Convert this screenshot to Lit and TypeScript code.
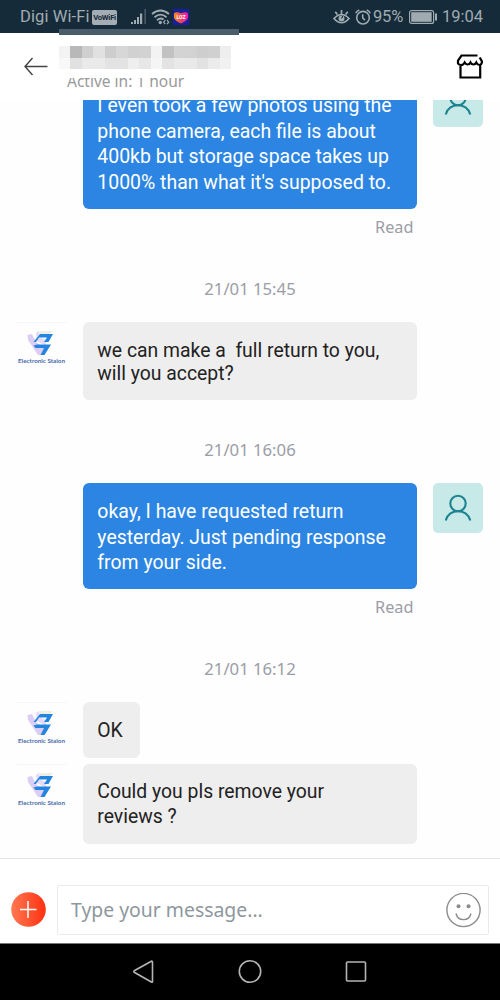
import { LitElement, html, css, svg, nothing } from "lit";
import { customElement, property } from "lit/decorators.js";

type Item =
  | { kind: "date"; text: string; height: number }
  | { kind: "read"; height: number }
  | { kind: "mine" | "shop"; lines: string[]; height: number; gap?: number; tight?: boolean; short?: boolean };

const ITEMS: Item[] = [
  {
    kind: "mine",
    height: 132,
    lines: [
      "I even took a few photos using the",
      "phone camera, each file is about",
      "400kb but storage space takes up",
      "1000% than what it's supposed to.",
    ],
  },
  { kind: "read", height: 36 },
  { kind: "date", text: "21/01 15:45", height: 77 },
  {
    kind: "shop",
    height: 78,
    tight: true,
    lines: ["we can make a  full return to you,", "will you accept?"],
  },
  { kind: "date", text: "21/01 16:06", height: 83 },
  {
    kind: "mine",
    height: 106,
    lines: ["okay, I have requested return", "yesterday. Just pending response", "from your side."],
  },
  { kind: "read", height: 36 },
  { kind: "date", text: "21/01 16:12", height: 77 },
  { kind: "shop", height: 56, short: true, lines: ["OK"] },
  { kind: "shop", height: 80, gap: 5.6, lines: ["Could you pls remove your", "reviews ?"] },
];

@customElement("status-bar")
export class StatusBar extends LitElement {
  static styles = css`
    :host {
      display: flex;
      align-items: center;
      height: 33px;
      padding: 1px 17px 0 20px;
      box-sizing: border-box;
      background: #152b39;
      color: #a0abb1;
      font: 16.5px/32px Roboto, sans-serif;
      white-space: nowrap;
    }
    .vowifi {
      margin-left: 3px;
      width: 25px;
      height: 15px;
      border-radius: 2px;
      background: #a3adb3;
      color: #152b39;
      font: bold 7.8px/15px Roboto, sans-serif;
      text-align: center;
      letter-spacing: -0.3px;
    }
    .signal { margin-left: 13px; }
    .wifi { margin-left: 4px; }
    .app { margin-left: 3px; }
    .right { display: flex; align-items: center; margin-left: auto; }
    .alarm { margin-left: 5px; }
    .pct { margin-left: 2px; width: 31px; letter-spacing: -0.2px; }
    .battery { margin: 0 4px 0 5px; }
    svg { display: block; }
    .carrier { letter-spacing: 0.1px; width: 69px; }
    .clock { width: 41px; }
  `;
  render() {
    return html`
      <span class="carrier">Digi Wi-Fi</span>
      <span class="vowifi">VoWiFi</span>
      <svg class="signal" width="17" height="16" viewBox="0 0 17 16">
        <g fill="#a0abb1">
          <rect x="1" y="13" width="2" height="2" /><rect x="4" y="11" width="2" height="4" />
          <rect x="7" y="8" width="2" height="7" /><rect x="10" y="4.500" width="2.200" height="10.500" />
          <rect x="14.500" y="0" width="1.300" height="15" opacity=".45" />
        </g>
      </svg>
      <svg class="wifi" width="19" height="16" viewBox="0 0 19 16" fill="none" stroke="#a0abb1" stroke-width="1.800">
        <path d="M1 5Q9.500-2 18 5M3.500 8.200Q9.500 3 15.500 8.200M6 11.200Q9.500 8.200 12.500 10.500" />
        <circle cx="9.300" cy="13.500" r="1.700" fill="#a0abb1" stroke="none" />
        <path d="M14.300 11.200l-1.700 2 1.700 2M16 11.200l1.700 2-1.700 2" stroke-width="1.200" />
      </svg>
      <svg class="app" width="16" height="16" viewBox="0 0 16 16">
        <defs><linearGradient id="h"><stop stop-color="#ff8a18" /><stop offset=".55" stop-color="#f73c62" /><stop offset="1" stop-color="#ef18b4" /></linearGradient></defs>
        <rect width="16" height="16" fill="#1420a0" />
        <path d="M1 4.500Q3 2 8 4.300Q13 2 15 4.500V9Q13.500 12 8 14.500Q2.500 12 1 9Z" fill="url(#h)" />
        <text x="8" y="10" font-size="5" font-weight="bold" text-anchor="middle" fill="#fff">LOZ</text>
      </svg>
      <span class="right">
        <svg width="17" height="16" viewBox="0 0 17 16" fill="none" stroke="#a0abb1" stroke-width="1.700">
          <path d="M1 9.500Q8.500 1.500 16 9.500Q8.500 18 1 9.500ZM8.500 5V1M4.300 5.500L2.300 2.800M12.700 5.500L14.700 2.800" />
          <circle cx="8.500" cy="9.500" r="3" fill="#a0abb1" stroke="none" />
          <path d="M8 9.200Q10 9 9.500 7" stroke="#152b39" stroke-width="1" />
        </svg>
        <svg class="alarm" width="16" height="16" viewBox="0 0 16 16" fill="none" stroke="#a0abb1" stroke-width="1.600">
          <circle cx="8" cy="8.700" r="6.300" />
          <path d="M.8 4.200Q1.700 1.800 4.300 1M15.200 4.200Q14.300 1.800 11.700 1M7.700 5.200V9L10 11.200" />
        </svg>
        <span class="pct">95%</span>
        <svg class="battery" width="29" height="14" viewBox="0 0 29 14">
          <rect x=".6" y=".6" width="24" height="12.800" rx="2" fill="none" stroke="#a0abb1" stroke-width="1.200" />
          <rect x="2.200" y="2.200" width="20.500" height="9.600" fill="#a0abb1" />
          <rect x="26" y="3.500" width="2" height="7" fill="#a0abb1" />
        </svg>
        <span class="clock">19:04</span>
      </span>
    `;
  }
}

const MOSAIC = [
  ["#f3f3f3", "#b8b8b8", "#cfcfcf", "#e1e1e1", "#cdcdcd", "#d7d7d7", "#d1d1d1", "#d2d2d2", "#f3f3f3", "#c2c2c2", "#d3d3d3", "#d2d2d2", "#cecece", "#d0d0d0", "#eeeeee"],
  ["#f8f8f8", "#e1e1e1", "#eaeaea", "#eaeaea", "#e3e3e3", "#e3e3e3", "#eeeeee", "#e7e7e7", "#f5f5f5", "#e3e3e3", "#e9e9e9", "#e9e9e9", "#e2e2e2", "#ebebeb", "#f1f1f1"],
];

@customElement("chat-header")
export class ChatHeader extends LitElement {
  static styles = css`
    :host {
      display: grid;
      grid-template-columns: 58.500px 180.500px 1fr auto;
      height: 67px;
      background: #fff;
      padding-right: 17px;
      box-sizing: border-box;
    }
    .back { margin: 24px 0 0 24px; display: block; }
    .strip { margin-top: -4px; height: 5.500px; background: #485d69; position: relative; }
    .mosaic { display: grid; grid-template-columns: repeat(15, 11.530px); grid-auto-rows: 11.500px; margin-top: 11.500px; }
    .active {
      height: 14px;
      margin-left: 8.500px;
      margin-top: 8.500px;
      overflow: hidden;
      color: #999;
      font: 15.500px/16px "Noto Sans", sans-serif;
      white-space: nowrap;
    }
    .active span { display: block; margin-top: -5px; }
    .store { display: block; margin-top: 20px; grid-column: 4; }
  `;
  render() {
    return html`
      <svg class="back" width="25" height="19" viewBox="0 0 25 19" fill="none" stroke="#444" stroke-width="1.400">
        <path d="M23.500 9.500H1M8.500 1L1 9.500L8.500 18" />
      </svg>
      <div>
        <div class="strip"></div>
        <div class="mosaic">
          ${MOSAIC.flat().map((c) => html`<i style="background:${c}"></i>`)}
        </div>
        <div class="active"><span>Active in: 1 hour</span></div>
      </div>
      <svg class="store" width="28" height="27" viewBox="0 0 28 27" fill="none" stroke="#000" stroke-width="2.200">
        <path d="M22.500 2.500H6.500L3 7.500V10.500Q4 12 6 12Q8.500 12 9.700 9.500Q11 11.500 12.800 11.500Q14.500 11.500 15.500 9.500Q16.500 11.500 18.500 11.500Q20.200 11.500 21.300 9.500Q22.500 12 24.500 12Q27 11.500 27 8.500L24.700 4.500M5.500 12V24.500H25.200V12" />
      </svg>
    `;
  }
}

@customElement("chat-avatar")
export class ChatAvatar extends LitElement {
  @property({ type: Boolean }) shop = false;
  static styles = css`
    :host { display: block; width: 50px; height: 50px; flex: none; }
    svg { display: block; }
    text { font: 700 6.100px Lato, sans-serif; }
  `;
  render() {
    if (!this.shop) {
      return html`<svg width="50" height="50" viewBox="0 0 50 50" fill="none" stroke="#1c8490" stroke-width="2.100">
        <rect width="50" height="50" rx="5" fill="#c7e9e7" stroke="none" />
        <circle cx="25" cy="20.500" r="7.700" />
        <path d="M12.700 37.500C16 25 34 25 37.300 37.500" />
      </svg>`;
    }
    return html`<svg width="50" height="50" viewBox="0 0 50 50">
      <path d="M0 .5H50" stroke="#f5f5f5" />
      <path d="M21 10L24 9H36L32 13H21Z" fill="#eeeee4" />
      <path d="M10.500 13L15 12L19 20L28 27L25 33H21L11 18Z" fill="#dccdf5" />
      <path d="M19 11L22 9V15L29 18V24L20 19Z" fill="#e5daf7" />
      <path d="M23 12H36L31.500 20H27L30 15.500H22L19 20H16.500Z" fill="#2385df" />
      <path d="M16.500 23.500L20 22.500H34L27.500 33H23.500L27 26H18.500Z" fill="#2385df" />
      <text x="1" y="41.300" textLength="47" lengthAdjust="spacingAndGlyphs" fill="#4969ad">Electronic Staion</text>
    </svg>`;
  }
}

@customElement("chat-thread")
export class ChatThread extends LitElement {
  static styles = css`
    :host { display: block; height: 758px; overflow: hidden; background: #fefefe; }
    .list { display: flex; flex-direction: column; margin-top: -23px; }
    .date, .read {
      display: flex;
      box-sizing: border-box;
      color: #9a9da7;
      font: 16.700px/20px "Noto Sans", sans-serif;
    }
    .read { align-items: center; justify-content: flex-end; padding-right: 86.500px; font-size: 16.300px; }
    .date { align-items: flex-start; justify-content: center; padding-top: 34px; }
    .date.low { padding-top: 40px; }
    .row { display: flex; align-items: flex-start; padding: 0 16.700px; gap: 16.600px; }
    .bubble {
      box-sizing: border-box;
      width: 333.400px;
      border-radius: 6px;
      padding: 1px 14px 0;
      display: flex;
      flex-direction: column;
      justify-content: center;
      color: #222;
      background: #eee;
      font: 19.360px/25.500px Roboto, sans-serif;
      white-space: pre;
    }
    .bubble.tight { line-height: 23px; }
    .bubble.short { width: 56.700px; }
    .mine { justify-content: flex-end; }
    .mine .bubble { background: #2c85e2; color: #fff; font-size: 19.460px; padding-top: 2.500px; }
  `;
  private item(i: Item) {
    if (i.kind === "date")
      return html`<div class="date ${i.height > 80 ? "low" : ""}" style="height:${i.height}px">${i.text}</div>`;
    if (i.kind === "read") return html`<div class="read" style="height:${i.height}px">Read</div>`;
    const mine = i.kind === "mine";
    return html`<div class="row ${i.kind}" style="margin-top:${i.gap ?? 0}px">
      ${mine ? nothing : html`<chat-avatar shop></chat-avatar>`}
      <div class="bubble ${i.tight ? "tight" : ""} ${i.short ? "short" : ""}" style="height:${i.height}px">${i.lines.map((l) => html`<span>${l}</span>`)}</div>
      ${mine ? html`<chat-avatar></chat-avatar>` : nothing}
    </div>`;
  }
  render() {
    return html`<div class="list">${ITEMS.map((i) => this.item(i))}</div>`;
  }
}

@customElement("message-composer")
export class MessageComposer extends LitElement {
  static styles = css`
    :host {
      display: flex;
      height: 85px;
      box-sizing: border-box;
      border-top: 1px solid #e4e4e4;
      background: #fff;
      padding: 26px 11px 0 11px;
      gap: 11px;
    }
    .add { margin-top: 7px; display: block; }
    .field {
      flex: 1;
      height: 50px;
      box-sizing: border-box;
      border: 1px solid #ebebeb;
      border-radius: 2px;
      display: flex;
      align-items: center;
      justify-content: space-between;
      padding: 0 7.500px 0 13px;
      color: #8e979e;
      font: 19.400px/26px "Noto Sans", sans-serif;
      white-space: nowrap;
    }
  `;
  render() {
    return html`
      <svg class="add" width="35" height="35" viewBox="0 0 35 35">
        <defs><linearGradient id="g" x1="0" x2="1"><stop stop-color="#ff7952" /><stop offset="1" stop-color="#ff3010" /></linearGradient></defs>
        <circle cx="17.500" cy="17.500" r="17.300" fill="url(#g)" />
        <path d="M17 9V26M9 17.500H25.500" stroke="#fff" stroke-width="1.500" />
      </svg>
      <div class="field">
        <span>Type your message...</span>
        <svg width="35" height="35" viewBox="0 0 35 35" fill="none" stroke="#8c8c8c" stroke-width="1.400">
          <circle cx="17.500" cy="17" r="16.600" />
          <path d="M10 20.500C12 28.700 23 28.700 25 20.500" />
          <g fill="#8c8c8c" stroke="none"><circle cx="12.500" cy="13.200" r="2" /><circle cx="22.500" cy="13.200" r="2" /></g>
        </svg>
      </div>
    `;
  }
}

@customElement("nav-bar")
export class NavBar extends LitElement {
  static styles = css`
    :host {
      display: flex;
      justify-content: center;
      gap: 82px;
      height: 57px;
      box-sizing: border-box;
      border-top: 1px solid #777;
      padding-top: 15px;
      background: #000;
    }
    svg { display: block; }
  `;
  render() {
    const shapes = [
      svg`<path d="M20.500 3.500V22.500Q20.500 23.800 19.300 23L2.200 13.200Q1.200 12.500 2.200 11.800L19.300 2.200Q20.500 1.600 20.500 3.500Z" />`,
      svg`<circle cx="12" cy="12.500" r="10.700" />`,
      svg`<rect x="2.500" y="3" width="19" height="19" rx="1" />`,
    ];
    return html`${shapes.map(
      (s) => html`<svg width="24" height="25" viewBox="0 0 24 25" fill="none" stroke="#b4b4b4" stroke-width="1.600">${s}</svg>`,
    )}`;
  }
}

@customElement("app-root")
export class AppRoot extends LitElement {
  static styles = css`
    :host { display: flex; flex-direction: column; width: 500px; height: 1000px; overflow: hidden; background: #fff; }
  `;
  render() {
    return html`<status-bar></status-bar><chat-header></chat-header><chat-thread></chat-thread><message-composer></message-composer><nav-bar></nav-bar>`;
  }
}
